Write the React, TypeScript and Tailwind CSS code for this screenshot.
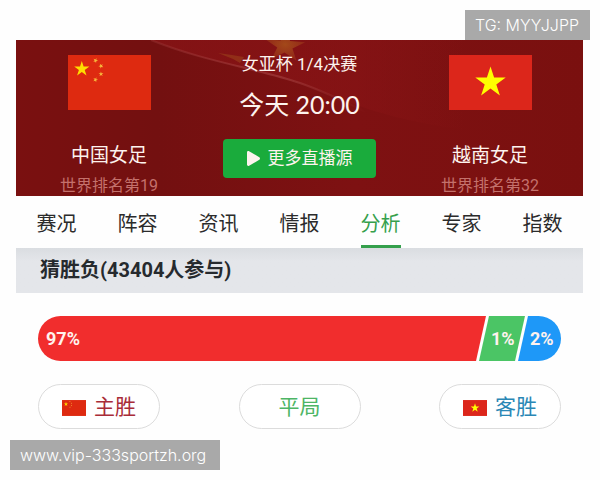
import { FaPlay } from "react-icons/fa"

interface Team {
  name: string
  rank: string
  flag: "cn" | "vn"
}

interface Segment {
  label: string
  className: string
}

const tabs = ["赛况", "阵容", "资讯", "情报", "分析", "专家", "指数"]

const home: Team = { name: "中国女足", rank: "世界排名第19", flag: "cn" }
const away: Team = { name: "越南女足", rank: "世界排名第32", flag: "vn" }

const segments: Segment[] = [
  {
    label: "97%",
    className:
      "flex-1 pl-2 bg-[#f12d2d] [clip-path:polygon(0_0,100%_0,calc(100%-10px)_100%,0_100%)]",
  },
  {
    label: "1%",
    className:
      "-ml-[7px] w-[46px] pl-3 bg-[#4bc565] [clip-path:polygon(10px_0,100%_0,calc(100%-10px)_100%,0_100%)]",
  },
  {
    label: "2%",
    className:
      "-ml-[7px] w-[43px] pl-3 bg-[#1e98f8] [clip-path:polygon(10px_0,100%_0,100%_100%,0_100%)]",
  },
]

const STAR = "0,-10 2.25,-3.09 9.51,-3.09 3.63,1.18 5.88,8.09 0,3.82 -5.88,8.09 -3.63,1.18 -9.51,-3.09 -2.25,-3.09"

const Flag = ({ code, className }: { code: "cn" | "vn"; className: string }) => {
  if (code === "vn") {
    return (
      <svg viewBox="0 0 83 55" className={className} aria-hidden="true">
        <rect width="83" height="55" fill="#dc261b" />
        <polygon points={STAR} fill="#ffff00" transform="translate(41.5 27.5) scale(1.6)" />
      </svg>
    )
  }

  return (
    <svg viewBox="0 0 83 55" className={className} aria-hidden="true">
      <rect width="83" height="55" fill="#de2a10" />
      <polygon points={STAR} fill="#ffde00" transform="translate(13.8 14) scale(0.8)" />
      <g fill="#f6b83c">
        <polygon points={STAR} transform="translate(27.5 5.5) rotate(24) scale(0.26)" />
        <polygon points={STAR} transform="translate(33 11) rotate(46) scale(0.26)" />
        <polygon points={STAR} transform="translate(33 19) rotate(70) scale(0.26)" />
        <polygon points={STAR} transform="translate(27.5 24.7) rotate(20) scale(0.26)" />
      </g>
    </svg>
  )
}

// ヘッダー背景の旗の模様
const HeaderBackground = () => (
  <svg
    viewBox="0 0 567 156"
    preserveAspectRatio="none"
    className="absolute inset-0 h-full w-full"
    aria-hidden="true"
  >
    <defs>
      <linearGradient id="base" x1="0" y1="0" x2="1" y2="0">
        <stop offset="0" stopColor="#7a1010" />
        <stop offset="0.25" stopColor="#731010" />
        <stop offset="0.6" stopColor="#7e1112" />
        <stop offset="1" stopColor="#7a100f" />
      </linearGradient>
      <linearGradient id="fold" x1="0" y1="0" x2="1" y2="0">
        <stop offset="0" stopColor="#8a1416" />
        <stop offset="0.6" stopColor="#8a1416" stopOpacity="0.8" />
        <stop offset="1" stopColor="#8a1416" stopOpacity="0" />
      </linearGradient>
      <linearGradient id="edge" x1="0" y1="0" x2="1" y2="0">
        <stop offset="0" stopColor="#a84444" stopOpacity="0.3" />
        <stop offset="0.6" stopColor="#a84444" stopOpacity="0.6" />
        <stop offset="1" stopColor="#a84444" stopOpacity="0" />
      </linearGradient>
      <radialGradient id="goldStar">
        <stop offset="0" stopColor="#b0601c" />
        <stop offset="1" stopColor="#98301a" />
      </radialGradient>
    </defs>
    <rect width="567" height="156" fill="url(#base)" />
    <path d="M135 0C190 22 240 28 284 43C330 60 360 78 450 90V0Z" fill="url(#fold)" opacity="0.7" />
    <path d="M135 0C190 22 240 28 284 43C310 52 330 62 350 72" fill="none" stroke="url(#edge)" strokeWidth="2" />
    <polygon points={STAR} fill="url(#goldStar)" opacity="0.7" transform="translate(269 6) rotate(4) scale(2.1 1.7)" />
    <path d="M202 13L216 15L228 17L224 23L217 19Z" fill="#a04a1c" opacity="0.5" />
  </svg>
)

const TeamBlock = ({ team }: { team: Team }) => (
  <div className="flex flex-col items-center pt-[15px]">
    <Flag code={team.flag} className="h-[55px] w-[83px]" />
    <p className="mt-[34px] text-[19px] leading-6">{team.name}</p>
    <p className="mt-2 text-base leading-5 text-[#c4716c]">{team.rank}</p>
  </div>
)

const voteClass =
  "flex h-[45px] w-[122px] items-center justify-center gap-2 rounded-full border border-[#dcdcdc] bg-white pt-[3px] text-[21px]"

const noteClass =
  "absolute bg-[#a9a9a9] px-[10px] font-[Inter,sans-serif] text-base leading-[30px] font-light text-white"

export default function App() {
  return (
    <div className="relative min-h-screen bg-[#fefefe] pt-10 font-[Roboto,'Noto_Sans_CJK_SC',sans-serif]">
      <main className="mr-[17px] ml-4">
        <header className="relative h-[156px] overflow-hidden bg-[#7a1011] text-[#fdf3ee]">
          <HeaderBackground />
          <div className="relative grid grid-cols-[186px_1fr_186px]">
            <TeamBlock team={home} />
            <div className="flex flex-col items-center pt-3">
              <h1 className="text-[17px] leading-6">女亚杯 1/4决赛</h1>
              <p className="mt-3 font-[Lato,'Noto_Sans_CJK_SC',sans-serif] text-[25px] leading-8">
                今天 20:00
              </p>
              <button className="mt-[19px] flex h-[39px] w-[153px] items-center justify-center gap-2 rounded-sm bg-[#1aab3c] text-[17px]">
                <FaPlay className="h-[15px] w-[13px]" preserveAspectRatio="none" />
                更多直播源
              </button>
            </div>
            <TeamBlock team={away} />
          </div>
        </header>

        <nav className="grid h-[52px] grid-cols-7 justify-items-center text-xl text-[#2b2b2b]">
          {tabs.map((tab) => (
            <a
              key={tab}
              href="#"
              className={
                tab === "分析"
                  ? "flex items-center border-b-3 border-[#35a04c] pt-[6px] text-[#35a04c]"
                  : "flex items-center pt-[3px]"
              }
            >
              {tab}
            </a>
          ))}
        </nav>

        <h2 className="bg-linear-to-b from-[#dadde1] to-[#e4e6ea] to-30% px-6 py-2 text-xl leading-[29px] font-bold text-[#262a2e]">
          猜胜负(43404人参与)
        </h2>

        <section className="px-[22px] pt-[23px]">
          <div className="flex h-[45px] overflow-hidden rounded-full text-lg font-bold text-[#fff2ee]">
            {segments.map((segment) => (
              <div key={segment.label} className={`flex items-center ${segment.className}`}>
                {segment.label}
              </div>
            ))}
          </div>

          <div className="mt-[23px] flex justify-between">
            <button className={`${voteClass} text-[#a92c38]`}>
              <Flag code="cn" className="h-4 w-6" />
              主胜
            </button>
            <button className={`${voteClass} text-[#4db565]`}>平局</button>
            <button className={`${voteClass} text-[#2a87b5]`}>
              <Flag code="vn" className="h-4 w-6" />
              客胜
            </button>
          </div>
        </section>
      </main>

      <div className={`${noteClass} top-[10px] right-[10px] min-w-[125px]`}>TG: MYYJJPP</div>
      <div className={`${noteClass} bottom-[10px] left-[10px] min-w-[210px]`}>
        www.vip-333sportzh.org
      </div>
    </div>
  )
}
